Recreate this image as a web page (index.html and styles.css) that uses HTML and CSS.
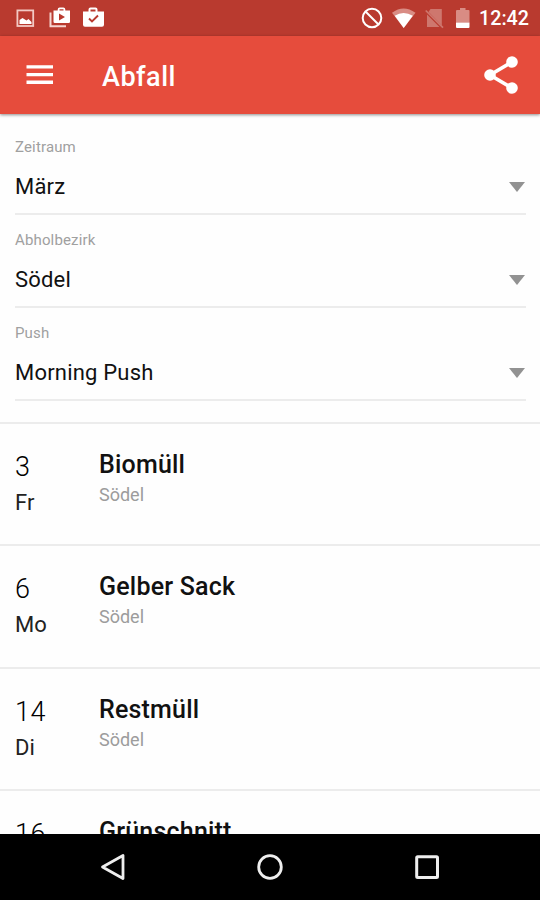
FILE: index.html
```html
<!DOCTYPE html>
<html lang="de">
<head>
    <meta charset="utf-8">
    <title>Abfall</title>
    <link rel="stylesheet" href="styles.css">
</head>
<body>
<div class="screen">
    <div class="statusbar">
        <svg width="90" height="36" viewBox="0 0 90 36">
            <!-- picture -->
            <rect x="2.4" y="10.4" width="15.8" height="15.6" fill="none" stroke="#f3c9c4" stroke-width="1.8"/>
            <path d="M4.500 24V20l3-2 4 2.500 2-1.500 3 3v2z" fill="#fff"/>
            <!-- play store -->
            <path d="M35.500 12.500v13.700h15.500" fill="none" stroke="#f6d5d1" stroke-width="2"/>
            <path fill="#fff" fill-rule="evenodd" d="M38.500 10.500h4.200V9.500q0-2 2-2h3.600q2 0 2 2v1H55v11.200q0 1.300-1.300 1.300H39.800q-1.300 0-1.300-1.300zM44.500 10.500h4V9.200h-4zM44 13.500v7l6-3.500z"/>
            <!-- installed -->
            <path fill="#fff" fill-rule="evenodd" d="M68 11.500h5.500V9.500q0-2 2-2h5q2 0 2 2v2H89v13.200q0 2-2 2H70q-2 0-2-2zM75.500 11.500h5v-2h-5z"/>
            <path d="M74 18.500l3 3 6-6" fill="none" stroke="#b93a2f" stroke-width="1.900"/>
        </svg>
        <div class="system">
            <svg width="112" height="36" viewBox="0 0 112 36">
                <circle cx="12" cy="18" r="9.300" fill="none" stroke="#fff" stroke-width="2"/>
                <path d="M5.500 11.500l13 13" stroke="#fff" stroke-width="2"/>
                <!-- wifi -->
                <path d="M32 12.800Q43.500 4 55.500 12.800L43.700 28z" fill="#d98c84"/>
                <path d="M34.700 15.800Q43.500 10 52.800 15.800L43.700 28z" fill="#fff"/>
                <!-- no sim -->
                <path d="M70.500 9H81.800V25.500L68.500 12z" fill="#ce776e"/>
                <path d="M67 14.500V27H79.500z" fill="#ce776e"/>
                <path d="M65.700 10.500L83 27.700" stroke="#ce776e" stroke-width="1.700"/>
                <!-- battery -->
                <path d="M96 11q0-1 1-1h3V8h5.500v2h3q1 0 1 1v11.500H96z" fill="#d98c84"/>
                <path d="M96 22.500h13.500V27q0 1-1 1H97q-1 0-1-1z" fill="#fff"/>
            </svg>
            <span class="clock">12:42</span>
        </div>
    </div>
    <div class="toolbar">
        <svg width="28" height="20" viewBox="0 0 28 20">
            <path d="M.5 1.900h26.500M.5 9.600h26.500M.5 17.300h26.500" stroke="#fff" stroke-width="3.400"/>
        </svg>
        <h1 class="title">Abfall</h1>
        <svg class="share" width="36" height="40" viewBox="0 0 36 40">
            <path d="M29 7L7 20l22 13" fill="none" stroke="#fff" stroke-width="3.600"/>
            <circle cx="29" cy="7" r="5.800" fill="#fff"/>
            <circle cx="7" cy="20" r="5.800" fill="#fff"/>
            <circle cx="29" cy="33" r="5.800" fill="#fff"/>
        </svg>
    </div>
    <div class="filters">
        <div class="field">
            <div class="label">Zeitraum</div>
            <div class="select"><span>März</span><i class="arrow"></i></div>
        </div>
        <div class="field">
            <div class="label">Abholbezirk</div>
            <div class="select"><span>Södel</span><i class="arrow"></i></div>
        </div>
        <div class="field">
            <div class="label">Push</div>
            <div class="select"><span>Morning Push</span><i class="arrow"></i></div>
        </div>
    </div>
    <div class="list">
        <div class="row">
            <div class="date"><div class="day">3</div><div class="weekday">Fr</div></div>
            <div class="info"><div class="name">Biomüll</div><div class="place">Södel</div></div>
        </div>
        <div class="row">
            <div class="date"><div class="day">6</div><div class="weekday">Mo</div></div>
            <div class="info"><div class="name">Gelber Sack</div><div class="place">Södel</div></div>
        </div>
        <div class="row">
            <div class="date"><div class="day">14</div><div class="weekday">Di</div></div>
            <div class="info"><div class="name">Restmüll</div><div class="place">Södel</div></div>
        </div>
        <div class="row">
            <div class="date"><div class="day">16</div></div>
            <div class="info"><div class="name">Grünschnitt</div></div>
        </div>
    </div>
    <div class="navbar">
        <svg width="28" height="28" viewBox="0 0 28 28"><path d="M24 2.500v23L3.500 14z" fill="none" stroke="#eee" stroke-width="2.800" stroke-linejoin="round"/></svg>
        <svg width="28" height="28" viewBox="0 0 28 28"><circle cx="14" cy="14" r="11.300" fill="none" stroke="#eee" stroke-width="2.800"/></svg>
        <svg width="28" height="28" viewBox="0 0 28 28"><rect x="3.700" y="3.700" width="20.800" height="20.800" rx="1" fill="none" stroke="#eee" stroke-width="3"/></svg>
    </div>
</div>
</body>
</html>
```
FILE: styles.css
```css
body {
    margin: 0;
    font-family: Roboto, "Liberation Sans", sans-serif;
    background: #fefefe;
}
svg {
    display: block;
    flex: none;
}
.screen {
    width: 540px;
    height: 900px;
    display: flex;
    flex-direction: column;
    overflow: hidden;
}
.statusbar {
    height: 36px;
    flex: none;
    display: flex;
    justify-content: space-between;
    background: #b93a2f;
    color: #fff;
    padding: 0 11px 0 15px;
}
.system {
    display: flex;
    gap: 7px;
}
.clock {
    width: 50px;
    font-size: 19.7px;
    font-weight: 500;
    line-height: 38px;
    white-space: nowrap;
}
.toolbar {
    height: 78px;
    flex: none;
    box-sizing: border-box;
    display: flex;
    align-items: center;
    background: #e64c3c;
    color: #fff;
    padding: 0 21px 0 26px;
    box-shadow: 0 1px 3px rgba(0, 0, 0, .45);
}
.title {
    margin: 3px 0 0 48px;
    font-size: 27px;
    font-weight: 500;
    line-height: 32px;
    letter-spacing: .5px;
}
.share {
    margin-left: auto;
}
.filters {
    height: 310px;
    flex: none;
    box-sizing: border-box;
    padding: 8px 14px 0 15px;
    border-bottom: 2px solid #ececec;
}
.field {
    height: 93px;
    box-sizing: border-box;
    padding-top: 16px;
    border-bottom: 2px solid #ececec;
}
.label {
    font-size: 15px;
    line-height: 18px;
    letter-spacing: .15px;
    color: #a0a0a0;
}
.select {
    display: flex;
    align-items: center;
    justify-content: space-between;
    margin-top: 17px;
    font-size: 22px;
    line-height: 28px;
    letter-spacing: .2px;
    color: #111;
}
.arrow {
    margin-right: 1px;
    border: 8.5px solid transparent;
    border-top: 10px solid #929292;
    border-bottom: 0;
}
.list {
    flex: 1;
    min-height: 0;
    overflow: hidden;
}
.row {
    height: 122.3px;
    box-sizing: border-box;
    display: flex;
    padding: 26px 15px 0;
    border-bottom: 2px solid #ececec;
}
.date {
    width: 84px;
    color: #222;
}
.day {
    font-size: 27px;
    font-weight: 300;
    line-height: 34px;
    letter-spacing: .5px;
    color: #000;
}
.weekday {
    margin-top: 5px;
    font-size: 22px;
    line-height: 28px;
}
.name {
    font-size: 25px;
    font-weight: 500;
    line-height: 30px;
    letter-spacing: .2px;
    color: #111;
}
.place {
    margin-top: 4px;
    font-size: 18px;
    line-height: 22px;
    color: #9c9c9c;
}
.navbar {
    height: 66px;
    flex: none;
    box-sizing: border-box;
    display: flex;
    justify-content: space-between;
    align-items: center;
    background: #000;
    padding: 0 99px 0 98.5px;
}
```
